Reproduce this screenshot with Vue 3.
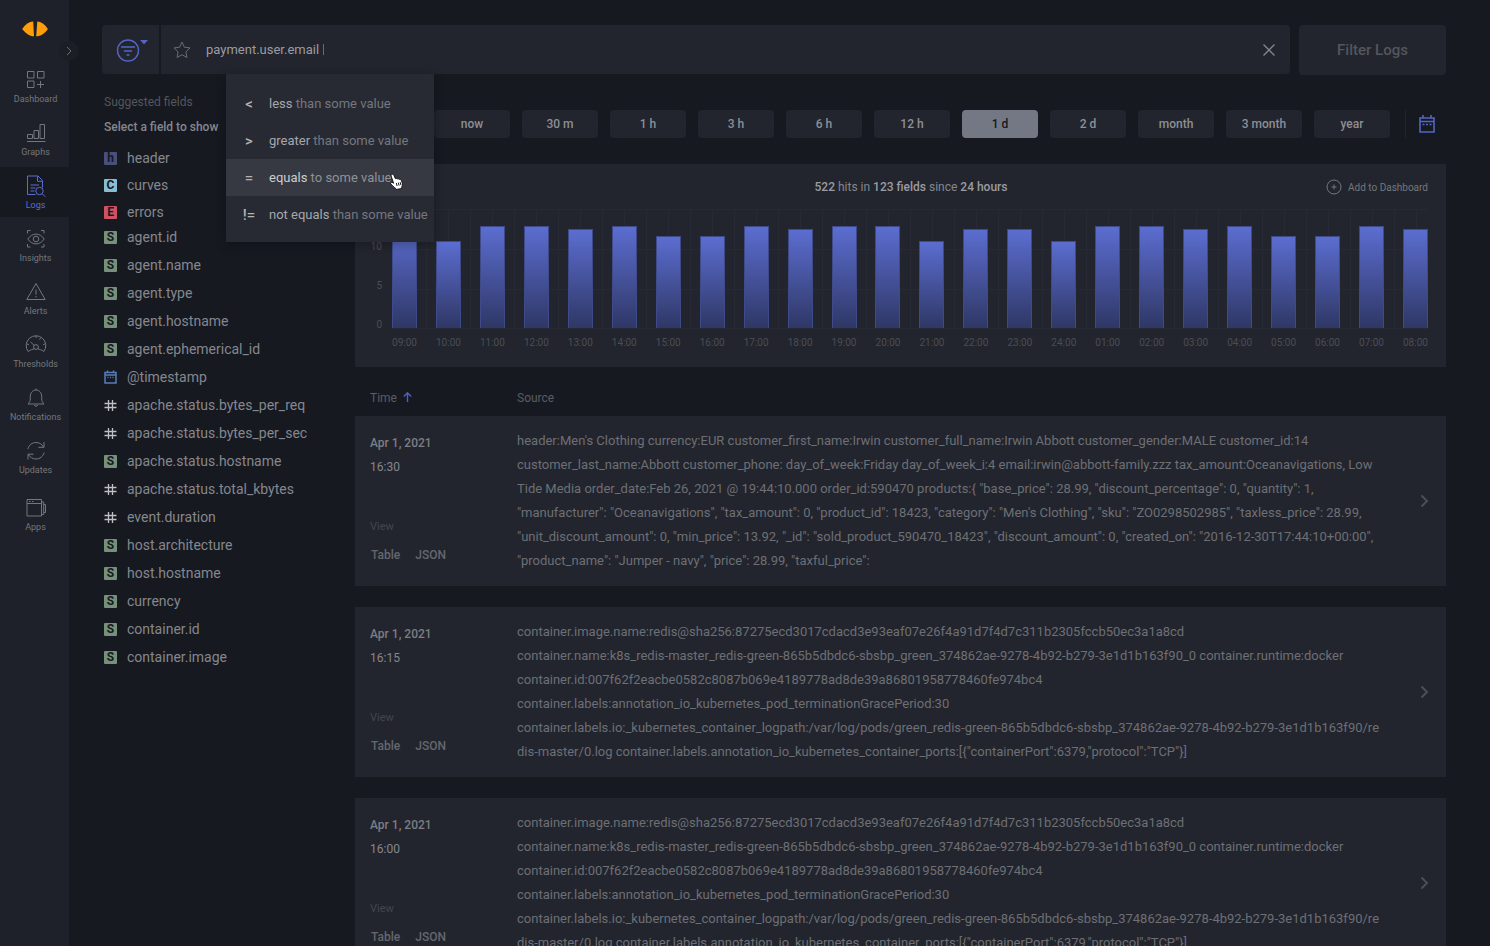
<script setup>
import { ref } from 'vue'

const query = ref('payment.user.email')
const activeNav = ref('Logs')
const activeRange = ref('1 d')

const navItems = ['Dashboard', 'Graphs', 'Logs', 'Insights', 'Alerts', 'Thresholds', 'Notifications', 'Updates', 'Apps']

const operators = [
  { sign: '<', name: 'less', rest: 'than some value' },
  { sign: '>', name: 'greater', rest: 'than some value' },
  { sign: '=', name: 'equals', rest: 'to some value', active: true },
  { sign: '!=', name: 'not equals', rest: 'than some value' },
]

const groups = [
  { letter: 'h', name: 'header' },
  { letter: 'C', name: 'curves' },
  { letter: 'E', name: 'errors' },
]

const fields = [
  { type: 'string', name: 'agent.id' },
  { type: 'string', name: 'agent.name' },
  { type: 'string', name: 'agent.type' },
  { type: 'string', name: 'agent.hostname' },
  { type: 'string', name: 'agent.ephemerical_id' },
  { type: 'date', name: '@timestamp' },
  { type: 'number', name: 'apache.status.bytes_per_req' },
  { type: 'number', name: 'apache.status.bytes_per_sec' },
  { type: 'string', name: 'apache.status.hostname' },
  { type: 'number', name: 'apache.status.total_kbytes' },
  { type: 'number', name: 'event.duration' },
  { type: 'string', name: 'host.architecture' },
  { type: 'string', name: 'host.hostname' },
  { type: 'string', name: 'currency' },
  { type: 'string', name: 'container.id' },
  { type: 'string', name: 'container.image' },
]

const ranges = ['now', '30 m', '1 h', '3 h', '6 h', '12 h', '1 d', '2 d', 'month', '3 month', 'year']

// hits per hour, the axis goes up to 15
const maxHits = 15
const hits = [
  ['09:00', 12.9], ['10:00', 11], ['11:00', 12.9], ['12:00', 12.9], ['13:00', 12.5], ['14:00', 12.9],
  ['15:00', 11.6], ['16:00', 11.6], ['17:00', 12.9], ['18:00', 12.5], ['19:00', 12.9], ['20:00', 12.9],
  ['21:00', 11], ['22:00', 12.5], ['23:00', 12.5], ['24:00', 11], ['01:00', 12.9], ['02:00', 12.9],
  ['03:00', 12.5], ['04:00', 12.9], ['05:00', 11.6], ['06:00', 11.6], ['07:00', 12.9], ['08:00', 12.5],
]

const orderLog = `header:Men's Clothing currency:EUR customer_first_name:Irwin customer_full_name:Irwin Abbott customer_gender:MALE customer_id:14
customer_last_name:Abbott customer_phone: day_of_week:Friday day_of_week_i:4 email:irwin@abbott-family.zzz tax_amount:Oceanavigations, Low
Tide Media order_date:Feb 26, 2021 @ 19:44:10.000 order_id:590470 products:{ "base_price": 28.99, "discount_percentage": 0, "quantity": 1,
"manufacturer": "Oceanavigations", "tax_amount": 0, "product_id": 18423, "category": "Men's Clothing", "sku": "ZO0298502985", "taxless_price": 28.99,
"unit_discount_amount": 0, "min_price": 13.92, "_id": "sold_product_590470_18423", "discount_amount": 0, "created_on": "2016-12-30T17:44:10+00:00",
"product_name": "Jumper - navy", "price": 28.99, "taxful_price":`

const containerLog = `container.image.name:redis@sha256:87275ecd3017cdacd3e93eaf07e26f4a91d7f4d7c311b2305fccb50ec3a1a8cd
container.name:k8s_redis-master_redis-green-865b5dbdc6-sbsbp_green_374862ae-9278-4b92-b279-3e1d1b163f90_0 container.runtime:docker
container.id:007f62f2eacbe0582c8087b069e4189778ad8de39a86801958778460fe974bc4
container.labels:annotation_io_kubernetes_pod_terminationGracePeriod:30
container.labels.io:_kubernetes_container_logpath:/var/log/pods/green_redis-green-865b5dbdc6-sbsbp_374862ae-9278-4b92-b279-3e1d1b163f90/re
dis-master/0.log container.labels.annotation_io_kubernetes_container_ports:[{"containerPort":6379,"protocol":"TCP"}]`

const logs = [
  { date: 'Apr 1, 2021', time: '16:30', source: orderLog },
  { date: 'Apr 1, 2021', time: '16:15', source: containerLog },
  { date: 'Apr 1, 2021', time: '16:00', source: containerLog },
]
</script>

<template>
  <div class="page">
    <aside class="sidebar">
      <a class="logo" href="#" aria-label="Home">
        <svg width="26" height="16" viewBox="0 0 26 16">
          <path d="M11.2.6 12 15.3C8 15.4 3.600 12.600.2 8 3.400 3.400 7 .8 11.200.6Z" fill="#ff9d0a" />
          <path d="M15.300.6C19 .8 22.800 3.400 25.900 8c-3.100 4.600-7 7.300-11.700 7.300Z" fill="#ff9d0a" />
        </svg>
      </a>
      <button class="expand" type="button" aria-label="Expand menu">
        <svg width="6" height="10" viewBox="0 0 6 10"><path d="m1 1 4 4-4 4" /></svg>
      </button>
      <nav class="nav">
        <a v-for="item in navItems" :key="item" href="#" class="nav-item"
          :class="{ active: item === activeNav, apart: item === 'Apps' }" @click.prevent="activeNav = item">
          <svg class="nav-icon" width="26" height="26" viewBox="0 0 26 26">
            <g v-if="item === 'Dashboard'">
              <path d="M4.500 4.500H11v6.500H4.500zM14.500 4.500H21v6.500h-6.500zM4.500 14H11v6.500H4.500zM17.500 14v7M14 17.500h7" />
            </g>
            <g v-else-if="item === 'Graphs'">
              <path d="M4.500 14.500h5v4h-5zM11 10.500h4.500v8H11zM17 4.500h4.500v14H17zM4 21.500h18.500" />
            </g>
            <g v-else-if="item === 'Logs'">
              <path d="M12.500 21.500H4.500V3h10.500l4.500 4.500v7M14.500 3.300v5h5M7.500 12h8.500M7.500 15h5M7.500 18h4" />
              <circle cx="16.500" cy="18" r="3.700" /><path d="m19.300 20.800 3 3" />
            </g>
            <g v-else-if="item === 'Insights'">
              <path d="M4.500 7.500v-3h3M18 4.500h3v3M21 18v3h-3M7.500 21h-3v-3" />
              <path d="M4.800 13c2.300-3.300 5-4.900 8.200-4.900s5.900 1.600 8.200 4.900c-2.300 3.300-5 4.900-8.200 4.900S7.100 16.300 4.800 13Z" />
              <circle cx="13" cy="13" r="2.800" />
            </g>
            <g v-else-if="item === 'Alerts'">
              <path d="M13 4.500 22.200 20.500H3.800ZM13 10.500v5.200M13 17v1.400" />
            </g>
            <g v-else-if="item === 'Thresholds'">
              <path d="M5.200 19.500a9.800 9.800 0 1 1 15.600 0c-1.400-1.300-3-1.700-4.300-2M5.200 19.500c1.400-1.300 3-1.700 4.300-2" />
              <circle cx="13" cy="15" r="2.400" />
              <path d="m11.200 13.500-3.700-3.600M13 4v2M3.800 12l2 .6M22.200 12l-2 .6M17.500 6l-1 1.600M9.300 17.500l2-.8M16.600 17.500l-1.800-.8" />
            </g>
            <g v-else-if="item === 'Notifications'">
              <path d="M5 19c1.500-1.500 2.300-3 2.300-5v-2.700c0-3.600 2.500-6.300 5.700-6.300s5.700 2.700 5.700 6.300v2.700c0 2 .8 3.500 2.300 5ZM13 3.500v1.500M11.300 20c.3 1.600 3.100 1.600 3.400 0" />
            </g>
            <g v-else-if="item === 'Updates'">
              <path d="M4.800 11C6 7 9 4.500 13 4.500c3.300 0 6 1.700 7.600 4.500M21 4v5.300h-5.600M21.200 14.500C20 18.500 17 21 13 21c-3.300 0-6-1.700-7.600-4.500M5 21.500v-5.300h5.600" />
            </g>
            <g v-else>
              <path d="M4 4.500h14.500v16.500H4zM4 8.500h14.500M6 6.500h1.500M9 6.500h1.500M18.500 7h2.200v12.500h-2.200M20.700 9.500H22.500v8h-1.800" />
            </g>
          </svg>
          <span>{{ item }}</span>
        </a>
      </nav>
    </aside>

    <main class="main">
      <form class="topbar" @submit.prevent>
        <button class="filter-menu" type="button" aria-label="Saved filters">
          <svg width="34" height="26" viewBox="0 0 34 26">
            <circle cx="13" cy="13.500" r="10.500" />
            <path d="M6 10h14M9 14h8M11.500 18h3" />
            <path class="caret" d="M25 3h8l-4 4.500Z" />
          </svg>
        </button>
        <div class="search">
          <button class="bare star" type="button" aria-label="Add to favourites">
            <svg width="18" height="18" viewBox="0 0 18 18">
              <path d="m9 1 2.400 5.200 5.600.7-4.100 3.900 1 5.700L9 13.700 4.100 16.500l1-5.700L1 6.900l5.600-.7Z" />
            </svg>
          </button>
          <input v-model="query" class="query" type="text" size="14" aria-label="Filter query">
          <span class="text-cursor"></span>
          <button class="bare clear" type="button" aria-label="Clear" @click="query = ''">
            <svg width="12" height="12" viewBox="0 0 12 12"><path d="m.5.5 11 11M11.500.5l-11 11" /></svg>
          </button>
          <ul class="operators">
            <li v-for="op in operators" :key="op.sign">
              <button class="operator" type="button" :class="{ active: op.active }">
                <span class="sign">{{ op.sign }}</span>
                <span><b>{{ op.name }}</b> {{ op.rest }}</span>
                <svg v-if="op.active" class="pointer" width="14" height="17" viewBox="0 0 14 17">
                  <path d="M1.600 1.500c.9-.7 1.900-.2 2.300.7l1.500 3.500c.5-.5 1.500-.4 1.900.2.600-.4 1.600-.2 1.900.5.700-.3 1.700 0 2 .8l1.100 2.800c.5 1.600 0 3-.7 4.200l.2 1.300-5.700 1-.6-1.300C3.600 14.300 2.700 12.600.8 11c-.5-.9.2-1.800 1.300-1.600l1.500.8L1.100 3c-.2-.6 0-1.200.5-1.500Z" />
                  <path class="lines" d="m6.300 10 .8 3M8.300 9.600l.8 3M10.200 9.200l.8 3" />
                </svg>
              </button>
            </li>
          </ul>
        </div>
        <button class="submit" type="submit">Filter Logs</button>
      </form>

      <div class="content">
        <section class="fields">
          <p class="fields-title">Suggested fields</p>
          <h2>Select a field to show</h2>
          <ul class="field-list groups">
            <li v-for="group in groups" :key="group.name">
              <span class="badge" :class="group.name">{{ group.letter }}</span>
              <a href="#">{{ group.name }}</a>
            </li>
          </ul>
          <ul class="field-list">
            <li v-for="field in fields" :key="field.name">
              <span v-if="field.type === 'string'" class="badge">S</span>
              <svg v-else-if="field.type === 'date'" class="date" width="13" height="14" viewBox="0 0 13 14">
                <path d="M1 2.500h11v10.500H1zM1 5h11M3.500.5v2M9.500.5v2M3.500 7.500h1M6 7.500h1M8.500 7.500h1" />
              </svg>
              <svg v-else class="hash" width="13" height="13" viewBox="0 0 13 13">
                <path d="M4.500 1v11M8.500 1v11M.5 4.500h12M.5 8.500h12" />
              </svg>
              <a href="#">{{ field.name }}</a>
            </li>
          </ul>
        </section>

        <section class="results">
          <div class="ranges">
            <button v-for="range in ranges" :key="range" class="range" type="button"
              :class="{ active: range === activeRange }" @click="activeRange = range">{{ range }}</button>
            <button class="bare calendar" type="button" aria-label="Pick dates">
              <svg width="16" height="18" viewBox="0 0 16 18">
                <path d="M1 3h14v14H1zM1 6.500h14M4 0v3M12 0v3M3.500 9.500h2M7 9.500h2M10.500 9.500h2" />
              </svg>
            </button>
          </div>

          <div class="chart-card">
            <div class="chart-head">
              <p><b>522</b> hits in <b>123 fields</b> since <b>24 hours</b></p>
              <button class="bare add" type="button">
                <svg width="16" height="16" viewBox="0 0 16 16">
                  <circle cx="8" cy="8" r="7" /><path d="M8 5.500v5M5.500 8h5" />
                </svg>
                Add to Dashboard
              </button>
            </div>
            <div class="chart">
              <div class="axis"><span>10</span><span>5</span><span>0</span></div>
              <div class="plot">
                <div v-for="[hour, count] in hits" :key="hour" class="slot">
                  <div class="bar" :style="{ height: count / maxHits * 100 + '%' }"></div>
                </div>
              </div>
              <div class="hours">
                <span v-for="[hour] in hits" :key="hour">{{ hour }}</span>
              </div>
            </div>
          </div>

          <table class="logs">
            <thead>
              <tr>
                <th class="time-col">
                  Time
                  <svg width="9" height="10" viewBox="0 0 9 10"><path d="M4.500 10V1M.8 4.500l3.700-3.700 3.700 3.700" /></svg>
                </th>
                <th>Source</th>
                <th class="open-col"></th>
              </tr>
            </thead>
            <tbody>
              <tr v-for="log in logs" :key="log.time">
                <td class="when">
                  <b>{{ log.date }}</b>
                  <span>{{ log.time }}</span>
                  <small>View</small>
                  <div class="views">
                    <a href="#">Table</a>
                    <a href="#">JSON</a>
                  </div>
                </td>
                <td class="source">{{ log.source }}</td>
                <td class="open">
                  <button class="bare" type="button" aria-label="Open log">
                    <svg width="9" height="14" viewBox="0 0 9 14"><path d="m1.500 1.500 5.500 5.500-5.500 5.500" /></svg>
                  </button>
                </td>
              </tr>
            </tbody>
          </table>
        </section>
      </div>
    </main>
  </div>
</template>

<style>
body {
  background: #161920;
}
</style>

<style scoped>
* {
  box-sizing: border-box;
}

.page {
  display: flex;
  height: 100vh;
  overflow: hidden;
  background: #161920;
  color: #85878e;
  font-family: Roboto, 'Liberation Sans', sans-serif;
  font-size: 13px;
}

svg {
  display: block;
  flex: none;
  fill: none;
  stroke: currentColor;
}

ul {
  margin: 0;
  padding: 0;
  list-style: none;
}

p, h2 {
  margin: 0;
}

a {
  color: inherit;
  text-decoration: none;
}

button, input {
  border: 0;
  padding: 0;
  font: inherit;
  color: inherit;
}

button {
  cursor: pointer;
}

.bare {
  background: none;
}

/* sidebar */
.sidebar {
  position: relative;
  flex: none;
  width: 69px;
  background: #1e2129;
}

.logo {
  display: flex;
  justify-content: center;
  padding: 21px 0 24px;
}

.logo svg {
  stroke: none;
}

.expand {
  position: absolute;
  top: 41px;
  right: -10px;
  display: flex;
  align-items: center;
  justify-content: center;
  width: 20px;
  height: 20px;
  border-radius: 50%;
  background: #1b1e25;
  color: #6a6c73;
}

.nav {
  display: flex;
  flex-direction: column;
  gap: 3px;
}

.nav-item {
  display: flex;
  flex-direction: column;
  align-items: center;
  padding: 6px 0 6px 2px;
  color: #74777e;
  font-size: 9px;
  line-height: 12px;
}

.nav-item.active {
  background: #161920;
  color: #5a6dd0;
}

.nav-item.apart {
  margin-top: 4px;
}

/* top bar */
.main {
  flex: 1;
  min-width: 0;
  padding: 25px 44px 0 33px;
  overflow-y: auto;
  scrollbar-width: none;
}

.topbar {
  display: flex;
  height: 49px;
}

.filter-menu {
  display: flex;
  align-items: center;
  justify-content: center;
  width: 57px;
  margin-right: 2px;
  padding-left: 3px;
  border-radius: 4px 0 0 4px;
  background: #22252d;
  color: #5365c4;
}

.filter-menu svg {
  stroke-width: 1.4;
}

.filter-menu .caret {
  fill: currentColor;
  stroke: none;
}

.search {
  position: relative;
  flex: 1;
  display: flex;
  align-items: center;
  padding: 0 15px 0 12px;
  border-radius: 0 4px 4px 0;
  background: #22252d;
}

.star {
  margin-right: 15px;
  color: #6a6c73;
}

.query {
  field-sizing: content;
  background: none;
  outline: none;
  color: #9a9ca2;
}

.text-cursor {
  width: 1px;
  height: 11px;
  margin-left: 4px;
  background: #5365c4;
}

.clear {
  margin-left: auto;
  color: #85878e;
}

.clear svg {
  stroke-width: 1.3;
}

.submit {
  width: 147px;
  height: 50px;
  margin-left: 9px;
  border-radius: 4px;
  background: #22252d;
  color: #53565d;
  font-size: 15px;
  font-weight: 500;
}

.operators {
  position: absolute;
  z-index: 2;
  top: 100%;
  left: 65px;
  width: 208px;
  padding: 11px 0 9px;
  background: #272a33;
  box-shadow: 0 2px 10px rgba(0, 0, 0, 0.3);
}

.operator {
  position: relative;
  display: flex;
  align-items: center;
  width: 100%;
  height: 37px;
  background: none;
  color: #74777e;
  text-align: left;
  white-space: nowrap;
}

.operator b {
  color: #a5a7ac;
  font-weight: 400;
}

.operator.active {
  background: #363941;
  color: #8f9197;
}

.operator.active b {
  color: #cccdd0;
}

.sign {
  width: 26px;
  margin: 0 7px 0 10px;
  color: #b4b3b3;
  font-size: 15px;
  font-weight: 500;
  text-align: center;
}

.pointer {
  position: absolute;
  top: 14px;
  left: 164px;
}

.pointer path {
  fill: #fff;
  stroke: #15171c;
}

.pointer .lines {
  fill: none;
}

/* suggested fields */
.content {
  display: flex;
}

.fields {
  flex: none;
  width: 253px;
  padding: 19px 0 0 2px;
}

.fields-title {
  color: #54565c;
  font-size: 12px;
  line-height: 18px;
}

.fields h2 {
  margin: 7px 0 12px;
  font-size: 12px;
  font-weight: 500;
  line-height: 18px;
}

.field-list {
  display: flex;
  flex-direction: column;
  gap: 8px;
}

.field-list.groups {
  gap: 7px;
  margin-bottom: 5px;
}

.field-list li {
  display: flex;
  align-items: center;
  gap: 10px;
  font-size: 14px;
  line-height: 20px;
}

.badge {
  width: 13px;
  height: 13px;
  border-radius: 1px;
  background: #769179;
  color: #161920;
  font-size: 12px;
  font-weight: 700;
  line-height: 13px;
  text-align: center;
}

.badge.header {
  background: #4a4e7b;
}

.badge.curves {
  background: #85bfd3;
}

.badge.errors {
  background: #cf5263;
}

.date {
  color: #587cba;
  stroke-width: 1.5;
}

.hash {
  color: #c0c0c2;
  stroke-width: 1.3;
}

/* results */
.results {
  flex: 1;
  min-width: 0;
}

.ranges {
  display: flex;
  justify-content: flex-end;
  gap: 12px;
  padding: 36px 0 26px;
}

.range {
  width: 76px;
  height: 28px;
  border-radius: 4px;
  background: #22252d;
  color: #8d8f96;
  font-size: 12px;
  font-weight: 500;
}

.range.active {
  background: #747784;
  color: #161920;
}

.calendar {
  height: 28px;
  margin-left: 3px;
  padding: 0 11px 0 13px;
  border-left: 1px solid #22252d;
  color: #5365c4;
}

.calendar svg {
  stroke-width: 1.6;
}

.chart-card {
  background: #22252d;
  height: 203px;
  padding: 14px 18px 0 15px;
}

.chart-head {
  display: grid;
  grid-template-columns: 1fr auto 1fr;
  align-items: center;
  height: 18px;
  padding-left: 24px;
  font-size: 12px;
}

.chart-head p {
  grid-column: 2;
}

.chart-head b {
  color: #9a9ca2;
  font-weight: 500;
}

.add {
  display: flex;
  align-items: center;
  justify-self: end;
  gap: 6px;
  color: #74777e;
  font-size: 10px;
}

.chart {
  display: grid;
  grid-template-columns: 12px 1fr;
  column-gap: 10px;
  margin-top: 13px;
  color: #4a4d55;
  font-size: 10px;
}

.plot {
  height: 120px;
}

.axis {
  display: flex;
  flex-direction: column;
  justify-content: space-between;
  grid-row: 1 / 3;
  height: 122px;
  padding-top: 32px;
  line-height: 12px;
  text-align: right;
}

.plot {
  display: flex;
  justify-content: space-between;
  border-bottom: 1px solid #272a35;
  background-image:
    linear-gradient(#272a35 1px, transparent 1px),
    linear-gradient(90deg, #272a35 1px, transparent 1px);
  background-size: 100% 40px, 22px 100%;
  background-position: 0 0, 12px 0;
}

.slot {
  display: flex;
  align-items: flex-end;
  width: 25px;
}

.bar {
  width: 100%;
  border: 1px solid #3f4a8a;
  border-bottom: 0;
  background: linear-gradient(#5b6dd0, #2f3765);
}

.hours {
  grid-column: 2;
  display: flex;
  justify-content: space-between;
  padding-top: 8px;
  line-height: 12px;
}

.hours span {
  width: 25px;
  text-align: center;
}

/* log table */
.logs {
  width: 100%;
  border-spacing: 0;
  table-layout: fixed;
}

.logs th {
  height: 49px;
  padding: 24px 0 0;
  color: #5b5d63;
  font-size: 12px;
  font-weight: 400;
  line-height: 14px;
  text-align: left;
  vertical-align: top;
}

.logs .time-col {
  width: 162px;
  padding-left: 15px;
}

.logs .open-col {
  width: 40px;
}

.time-col svg {
  display: inline-block;
  margin-left: 3px;
  color: #4f60c0;
  stroke-width: 1.4;
}

.logs td {
  padding: 13px 0;
  border-bottom: 21px solid transparent;
  background: #22252d;
  background-clip: padding-box;
  vertical-align: top;
}

.logs .when {
  padding: 15px 0 0 15px;
  font-size: 12px;
  line-height: 24px;
}

.when b, .when span, .when small {
  display: block;
}

.when b {
  color: #7c7e84;
  font-weight: 500;
}

.when small {
  margin-top: 36px;
  color: #43464d;
  font-size: 11px;
}

.views {
  display: flex;
  gap: 15px;
  margin: 4px 0 0 1px;
  color: #65676d;
  font-weight: 500;
}

.source {
  color: #6d6f75;
  line-height: 24px;
  white-space: pre-line;
}

.logs .open {
  vertical-align: middle;
}

.open button {
  display: block;
  margin-left: 14px;
  color: #4d4f55;
}

.open svg {
  stroke-width: 2;
}
</style>
